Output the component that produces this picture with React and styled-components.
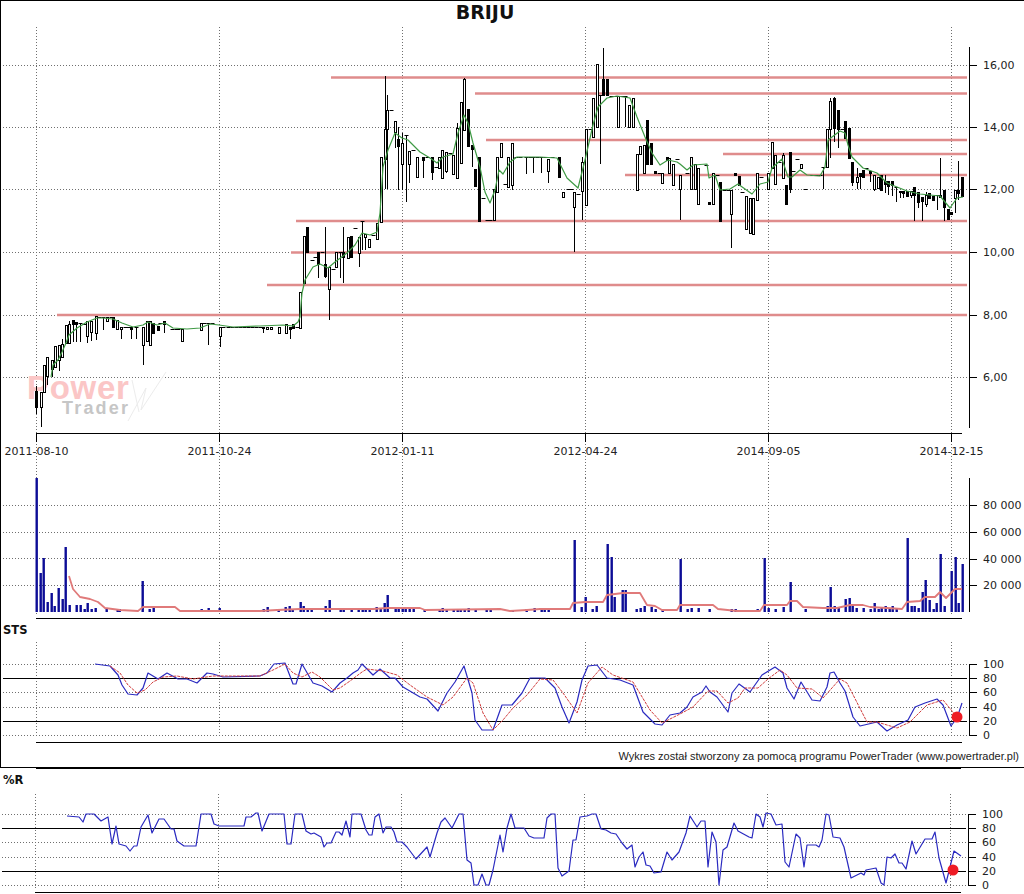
import React from "react";
import styled, { createGlobalStyle } from "styled-components";

const GlobalStyle = createGlobalStyle`
  html, body {
    margin: 0;
    padding: 0;
    background: #fff;
    overflow: hidden;
  }
  #root {
    width: 1024px;
    height: 894px;
  }
`;

const Page = styled.div`
  width: 1024px;
  height: 894px;
  background: #fff;
  font-family: "DejaVu Sans", Verdana, sans-serif;
  color: #111;
  overflow: hidden;
`;

const UpperFrame = styled.div`
  box-sizing: border-box;
  height: 768px;
  border-top: 1px solid #000;
  border-left: 1px solid #000;
  border-bottom: 1px solid #000;
  display: flex;
  flex-direction: column;
`;

const ChartTitle = styled.div`
  width: 968px;
  height: 24px;
  line-height: 22px;
  text-align: center;
  font-size: 19px;
  font-weight: 700;
`;

const PanelLabel = styled.div`
  height: ${({ $h }) => $h}px;
  padding-left: 2px;
  font-size: 11.5px;
  font-weight: 700;
  line-height: 17px;
`;

const Credit = styled.div`
  height: 18px;
  line-height: 16px;
  padding-right: 5px;
  text-align: right;
  font-family: "Liberation Sans", Arial, sans-serif;
  font-size: 11px;
  color: #222;
  white-space: nowrap;
`;

const ThickRule = styled.div`
  width: 925px;
  height: 1px;
  margin-left: 36px;
  background: #000;
`;

const LowerLabel = styled(PanelLabel)`
  padding-left: 3px;
  padding-top: 3px;
  height: 22px;
`;

const PlotSvg = styled.svg`
  display: block;
  flex: none;
`;

const GridLine = styled.line`
  stroke: #6f6f6f;
  stroke-width: 1;
  stroke-dasharray: 1 2;
`;

const AxisLine = styled.line`
  stroke: #000;
  stroke-width: 1;
`;

const AxisText = styled.text`
  font-family: "DejaVu Sans", Verdana, sans-serif;
  font-size: 11px;
  fill: #222;
`;

const LevelLine = styled.line`
  stroke: #df8c8c;
  stroke-width: 2.5;
`;

const Wick = styled.line`
  stroke: #000;
  stroke-width: 1;
`;

const Body = styled.rect`
  fill: ${({ $filled }) => ($filled ? "#000" : "#fff")};
  stroke: #000;
  stroke-width: 1;
`;

const Series = styled.polyline`
  fill: none;
  stroke: ${({ $color }) => $color};
  stroke-width: ${({ $w }) => $w || 1.2}px;
  stroke-linejoin: round;
  stroke-dasharray: ${({ $dash }) => $dash || "none"};
`;

const VolumeBar = styled.rect`
  fill: #0c0c96;
`;

const Marker = styled.circle`
  fill: #ee1c25;
`;

const MarkPower = styled.text`
  font-family: "Liberation Sans", Arial, sans-serif;
  font-size: 33px;
  font-weight: 700;
  letter-spacing: 0.7px;
  fill: #fbc6c6;
`;

const MarkTrader = styled.text`
  font-family: "Liberation Sans", Arial, sans-serif;
  font-size: 18px;
  font-weight: 700;
  letter-spacing: 2.2px;
  fill: #c6c6c6;
`;

const MarkStroke = styled.path`
  fill: none;
  stroke: #ececec;
  stroke-width: 1;
`;

// all chart data below is in page pixels, the svg viewBox takes care of the offset
const gridX = [36, 219, 402, 585, 768, 951];
const dates = ["2011-08-10", "2011-10-24", "2012-01-11", "2012-04-24", "2014-09-05", "2014-12-15"];

const levels = [
  [331, 77.5], [475, 93.5], [486, 140], [723, 154], [625, 175],
  [296, 221], [291, 252.5], [267, 285], [57, 315],
];

// x, high, body top, body bottom, low, filled
const candles = [
  [36,386,391,407,414,1],[41,392,392,407,427,0],[44,365,365,392,392,0],[47,357,357,376,385,0],[52,360,360,369,377,0],
  [55,346,346,367,367,0],[59,345,345,360,371,0],[62,339,344,357,357,0],[66,325,325,343,343,0],[69,321,324,343,343,0],
  [73,320,320,324,342,1],[76,322,322,324,342,1],[80,323,323,323,342,1],[84,324,324,324,324,1],[87,321,321,336,343,0],
  [91,321,321,332,341,0],[96,316,316,333,340,0],[99,317,317,317,317,1],[103,317,317,317,330,1],[107,317,317,321,321,0],
  [111,317,317,317,317,1],[113,317,317,327,327,1],[117,320,320,329,329,0],[121,327,327,329,339,0],[125,327,327,327,327,1],
  [128,327,327,327,327,1],[131,327,327,329,339,1],[136,327,327,327,339,1],[143,327,327,345,365,0],[147,321,321,341,341,0],
  [150,321,321,345,345,0],[153,323,323,333,333,1],[158,326,326,330,330,1],[160,323,323,323,323,1],[164,321,321,324,333,1],
  [172,329,329,329,329,1],[176,329,329,329,329,1],[178,329,329,329,329,1],[182,329,329,341,341,0],[201,323,323,330,330,0],
  [204,323,323,323,323,1],[208,323,323,323,345,1],[212,323,323,323,323,1],[220,327,327,336,347,0],[223,327,327,327,327,1],
  [228,327,327,327,327,1],[232,327,327,327,327,1],[236,327,327,327,327,1],[240,327,327,327,327,1],[244,327,327,327,327,1],
  [248,327,327,327,327,1],[252,327,327,327,327,1],[256,327,327,327,327,1],[260,327,327,327,327,1],[263,327,327,328,333,1],
  [267,327,327,329,329,0],[271,327,327,329,329,0],[279,327,327,333,333,0],[286,324,324,333,333,0],[290,327,327,329,339,1],
  [293,324,324,328,328,1],[297,327,327,327,327,1],
  [300,292,292,328,328,0],[304,236,236,283,283,0],[307,227,227,252,252,1],[312,260,260,260,260,1],[315,257,257,257,257,1],
  [318,252,252,264,278,1],[322,252,252,252,252,1],[325,227,264,276,278,1],[329,267,267,289,320,0],[333,269,269,269,269,1],
  [336,252,252,267,267,0],[340,252,252,252,278,1],[343,227,252,257,283,1],[348,237,237,258,258,0],[351,236,236,257,257,1],
  [355,228,228,228,228,1],[359,237,237,253,267,0],[362,221,221,221,250,1],[365,234,234,237,250,0],[369,239,239,247,247,0],
  [373,235,235,235,235,1],[377,223,223,239,239,0],[381,157,157,222,222,0],[385,76,129,159,189,0],[387,95,110,129,189,0],
  [391,110,110,110,110,1],[395,121,121,132,148,0],[398,127,139,146,190,1],[402,133,143,164,190,0],[406,135,135,135,202,1],
  [409,151,151,164,183,0],[413,150,150,150,150,1],[417,157,157,177,177,0],[423,157,157,160,178,1],[427,157,157,157,157,1],
  [432,157,157,172,180,1],[436,167,167,167,167,1],[439,157,157,168,168,0],[442,150,150,178,178,0],[446,152,152,171,173,0],
  [450,153,153,153,153,1],[453,155,155,174,174,0],[457,123,128,178,178,0],[461,102,102,163,163,0],[464,78,79,130,130,0],
  [468,109,109,146,146,1],[472,145,145,149,167,1],[475,169,169,186,186,1],[479,157,157,221,221,1],[483,198,198,198,198,1],
  [487,220,220,220,220,1],[490,220,220,220,220,1],[494,189,189,220,220,0],[497,157,157,192,192,0],[501,143,143,157,157,0],
  [505,184,184,184,184,1],[508,157,157,187,187,0],[512,143,143,185,190,0],[516,157,157,157,157,1],[520,157,157,157,157,1],
  [526,157,157,157,174,1],[530,157,157,157,157,1],[533,157,157,157,173,1],[537,157,157,157,157,1],[541,157,157,157,173,1],
  [545,157,157,157,157,1],[548,159,159,171,183,0],[552,157,157,157,157,1],[559,157,157,177,177,1],[563,192,192,197,197,0],
  [568,189,189,189,189,1],[571,189,189,189,189,1],[574,192,192,207,252,0],[578,194,194,194,194,1],[582,157,162,191,220,0],
  [586,129,129,205,205,0],[590,129,129,129,129,1],[593,98,98,137,137,0],[597,64,64,127,127,0],[600,95,95,95,164,1],
  [603,48,79,95,95,1],[607,79,79,95,95,1],[611,96,96,96,96,1],[615,96,96,96,96,1],[618,96,96,127,127,0],
  [622,96,96,96,96,1],[625,96,96,96,127,1],[629,105,105,127,127,0],[633,98,98,127,127,0],[637,154,154,190,190,0],
  [640,146,146,154,154,0],[644,145,145,173,173,0],[647,120,120,164,164,1],[651,143,143,164,164,1],[655,171,171,173,173,1],
  [659,173,173,173,173,1],[662,173,173,183,183,0],[667,157,157,160,160,1],[669,158,158,173,173,0],[673,164,164,185,185,0],
  [677,159,159,159,159,1],[680,175,175,189,220,0],[687,173,173,173,173,1],[691,157,157,189,189,0],[695,164,164,189,189,0],
  [698,168,168,204,204,0],[706,165,165,165,165,1],[709,202,202,204,204,1],[713,173,173,204,204,0],[717,175,175,175,175,1],
  [720,182,182,221,221,1],[724,190,190,190,190,1],[728,190,190,190,190,1],[731,190,190,214,248,0],[735,173,173,175,175,1],
  [739,176,176,185,185,1],[742,192,192,192,192,1],[746,196,196,229,229,0],[750,198,198,233,233,0],[753,198,198,234,234,0],
  [757,173,173,200,200,0],[761,177,177,177,177,1],[768,173,173,189,189,0],[772,142,142,168,168,0],[775,155,155,184,184,0],
  [779,162,162,162,162,1],[783,153,155,178,178,0],[786,185,185,204,204,1],[790,152,152,189,193,1],[793,171,171,171,171,1],
  [797,159,159,159,159,1],[801,164,164,168,168,0],[805,189,189,189,189,1],[812,175,175,175,175,1],[816,175,175,175,175,1],
  [820,175,175,175,175,1],[823,167,167,167,189,1],[827,129,129,167,167,0],[830,98,101,129,158,0],[834,97,98,128,142,1],
  [838,110,110,129,148,1],[842,129,129,129,129,1],[845,121,121,138,138,1],[849,128,128,158,158,1],[852,162,162,182,186,1],
  [857,168,177,182,189,0],[860,173,173,176,189,1],[863,170,170,177,177,1],[866,168,168,168,168,1],[870,171,171,173,182,1],
  [874,175,175,189,191,0],[878,177,177,188,188,0],[881,175,175,190,190,1],[885,175,181,184,193,1],[888,181,181,186,195,1],
  [892,181,181,185,196,1],[896,187,187,187,202,1],[900,191,191,192,198,1],[903,191,191,193,198,1],[907,191,191,196,196,1],
  [911,191,191,195,198,0],[914,187,187,195,221,1],[918,192,192,202,208,1],[922,197,197,201,221,1],[926,192,195,204,207,0],
  [929,193,193,198,198,1],[933,196,196,200,200,1],[937,195,195,195,210,1],[940,158,195,197,197,1],[944,190,190,207,221,1],
  [948,209,209,219,219,1],[951,212,212,214,214,1],[955,190,190,198,213,0],[958,161,190,193,200,1],[962,177,177,196,196,1],
];

const maLine = "51,377 53,365 58,360 62,352 66,343 69,335 77,328 87,322 97,318 103,318 113,319 122,323 133,327 143,325 148,322 157,325 165,323 173,328 187,329 200,328 210,324 219,325 233,327 260,326 283,325 293,326 298,322 300,317 302,293 305,280 313,267 320,264 328,268 335,262 347,253 355,245 362,233 370,235 377,232 380,213 383,167 388,150 395,133 402,138 408,140 420,152 430,158 437,163 443,157 453,154 458,133 464,115 468,123 473,143 480,167 485,192 490,203 495,190 499,170 503,174 510,162 517,157 540,157 557,158 567,178 578,188 585,160 593,125 598,107 607,98 617,96 630,98 637,117 645,137 652,153 660,165 668,160 677,162 680,164 687,170 693,165 707,164 709,178 715,175 720,190 730,189 738,184 752,194 760,184 768,182 772,168 782,159 788,177 792,177 800,170 807,175 820,176 825,167 828,140 840,131 845,133 848,145 852,157 863,168 877,173 887,183 907,191 920,194 940,196 950,208 957,198 963,197";

// x, top
const volumes = [
  [36,478],[40,573],[43,558],[47,602],[51,593],[54,606],[58,588],[62,599],[65,547],[69,605],[76,605],[80,605],[84,609],[87,603],[91,609],[95,608],
  [106,609],[117,609],[119,609],[142,581],[149,609],[153,608],[201,609],[208,608],[219,608],[263,609],[267,607],[278,609],[285,607],[289,606],[292,609],
  [300,602],[303,606],[307,609],[311,609],[325,606],[329,600],[340,608],[343,608],[351,609],[358,609],[362,609],[365,609],[369,609],[376,607],[380,609],
  [384,603],[387,595],[395,608],[398,608],[402,607],[405,609],[409,607],[413,609],[424,610],[439,610],[442,608],[446,610],[453,609],[457,609],[460,609],
  [464,609],[468,608],[475,609],[486,609],[490,609],[512,610],[526,609],[534,608],[541,608],[544,609],[548,608],[574,540],[581,607],[585,597],[592,609],
  [596,606],[607,544],[611,557],[614,597],[622,590],[625,590],[636,609],[640,608],[644,606],[651,607],[655,609],[662,610],[680,559],[687,609],[691,608],
  [698,608],[709,609],[731,609],[735,609],[757,609],[764,558],[768,608],[775,609],[783,607],[790,582],[805,609],[827,606],[830,587],[834,606],[838,608],
  [845,599],[849,598],[852,604],[856,608],[863,608],[870,609],[874,603],[878,609],[881,608],[885,606],[889,608],[892,606],[896,608],[907,538],[911,606],
  [914,606],[918,608],[922,592],[925,580],[929,600],[933,609],[936,603],[940,554],[944,606],[951,571],[955,557],[958,603],[962,564],
];

const volumeAvg = "69,576 73,589 80,597 90,599 98,602 105,608 120,610 138,611 143,607 175,607 180,611 260,611 277,610 300,609 340,609 373,609 387,608 420,608 425,610 500,609 510,611 527,610 540,609 570,609 573,603 585,602 603,602 607,595 623,593 640,593 647,605 655,606 662,610 677,610 680,605 713,605 718,609 737,611 760,611 764,605 787,605 790,601 797,601 803,607 823,608 837,608 850,605 863,605 870,607 887,608 902,609 907,602 920,601 925,597 935,597 940,592 946,598 955,589 962,589";

const stsK = "95,664 110,666 118,675 122,685 128,694 137,695 143,688 148,673 158,679 167,673 178,679 187,679 197,683 207,673 213,674 223,677 260,676 267,673 274,664 285,663 293,684 296,684 302,664 313,683 322,686 332,692 340,683 347,678 353,673 358,670 362,664 373,675 380,669 390,678 395,678 403,687 420,697 427,699 438,711 447,693 455,682 464,666 472,693 475,720 482,730 493,730 502,705 512,705 522,693 530,678 545,678 555,688 562,707 569,723 577,702 582,680 588,666 597,665 607,678 620,680 633,685 643,712 655,724 662,725 670,715 680,713 687,707 693,697 702,692 706,686 710,692 717,697 728,712 732,693 739,684 750,692 762,675 775,667 783,673 787,688 794,699 801,682 812,700 820,701 827,687 830,673 834,672 840,683 845,691 853,717 860,726 877,722 887,731 897,725 908,720 915,707 925,703 937,699 943,705 951,726 957,718 962,703";

const stsD = "110,666 120,673 128,685 137,693 145,690 153,682 163,677 177,676 193,679 213,676 260,676 273,670 285,664 293,673 302,677 312,672 320,677 333,690 340,688 350,681 362,672 367,669 383,671 397,675 410,685 427,697 443,705 453,697 467,678 473,683 483,713 493,730 503,720 513,708 527,695 540,679 553,680 563,693 577,713 588,683 602,667 613,675 633,682 650,710 662,723 680,714 693,707 708,691 717,691 728,703 738,698 745,688 758,688 768,679 780,670 787,675 797,688 812,689 823,698 840,679 847,683 867,722 877,722 897,728 910,722 927,705 943,700 957,717";

const wpr = "68,816 80,817 84,822 87,814 95,814 102,821 109,817 113,844 117,826 120,844 127,846 131,851 135,846 138,846 142,827 149,815 153,833 160,819 165,819 172,829 175,829 178,841 185,846 197,846 202,814 212,814 215,824 220,826 245,826 247,817 252,817 257,813 259,813 263,831 270,814 285,814 288,844 292,844 296,814 303,814 307,831 312,834 315,833 322,837 325,847 328,843 332,843 337,832 340,832 343,835 347,821 351,837 353,814 362,814 367,830 370,835 373,835 376,817 380,814 384,833 387,827 392,827 395,832 398,842 403,842 408,847 417,859 428,847 431,857 438,833 442,822 446,818 453,828 460,814 464,814 468,860 472,863 475,885 479,885 483,874 487,885 490,885 494,870 501,835 504,852 508,828 512,814 516,828 525,828 530,836 535,838 545,838 548,818 552,814 556,814 559,868 563,876 570,871 574,840 577,840 581,817 588,816 593,814 597,814 602,829 607,830 612,833 617,834 623,843 628,849 633,845 636,867 640,857 644,852 647,865 651,866 655,873 662,872 668,852 673,860 680,852 687,833 691,816 698,827 702,821 706,821 709,867 713,832 717,842 720,885 724,850 728,847 735,823 739,831 750,837 753,838 757,814 761,817 764,827 767,813 772,814 777,825 783,824 786,862 790,867 797,834 801,838 805,867 808,845 817,845 820,847 823,840 827,814 830,815 834,837 841,838 845,847 852,878 862,873 865,875 867,870 877,868 882,883 885,885 888,857 892,858 896,854 900,863 903,863 907,869 913,841 917,854 926,839 933,839 936,832 940,858 947,883 955,851 962,856";

const Plot = ({ top, height, children }) => (
  <PlotSvg width="1023" height={height} viewBox={`1 ${top} 1023 ${height}`}>
    {children}
  </PlotSvg>
);

const WideGrid = ({ ys, y1, y2, x1 = 3 }) => (
  <>
    {ys.map((y) => (
      <GridLine key={y} x1={x1} x2="968" y1={y + 0.5} y2={y + 0.5} />
    ))}
    {gridX.map((x) => (
      <GridLine key={x} x1={x + 0.5} x2={x + 0.5} y1={y1} y2={y2} />
    ))}
  </>
);

const ValueAxis = ({ ticks, y1, y2 }) => (
  <>
    <AxisLine x1="969.5" x2="969.5" y1={y1} y2={y2} />
    {ticks.map(([y, label]) => (
      <React.Fragment key={label}>
        <AxisLine x1="969" x2="977" y1={y + 0.5} y2={y + 0.5} />
        <AxisText x="983" y={y + 4}>{label}</AxisText>
      </React.Fragment>
    ))}
  </>
);

const Candle = ({ c }) => {
  const [x, hi, top, bot, lo, filled] = c;
  const cx = Math.round(x) + 0.5;
  if (top === bot) {
    return (
      <>
        <Wick x1={cx} x2={cx} y1={hi} y2={lo} />
        <Wick x1={cx - 2} x2={cx + 2} y1={top + 0.5} y2={top + 0.5} />
      </>
    );
  }
  return (
    <>
      <Wick x1={cx} x2={cx} y1={hi} y2={lo} />
      <Body $filled={filled} x={cx - 1} y={top + 0.5} width="2" height={bot - top} />
    </>
  );
};

const PriceChart = () => (
  <Plot top={25} height={453}>
    <WideGrid ys={[65, 127, 189, 252, 315, 377]} y1={27} y2={478} />
    <MarkStroke d="M128 421 L146 388 L141 410 L166 372 M132 380 L139 412" />
    <MarkPower x="27" y="398.5">Power</MarkPower>
    <MarkTrader x="62" y="414">Trader</MarkTrader>
    {levels.map(([x, y]) => (
      <LevelLine key={y} x1={x} x2="967" y1={y} y2={y} />
    ))}
    {candles.map((c) => (
      <Candle key={c[0]} c={c} />
    ))}
    <Series $color="#3f9a45" points={maLine} />
    <AxisLine x1="36" x2="962" y1="433.5" y2="433.5" />
    {gridX.map((x, i) => (
      <React.Fragment key={x}>
        <AxisLine x1={x + 0.5} x2={x + 0.5} y1="433" y2="442" />
        <AxisText x={x + 0.5} y="455" textAnchor="middle">{dates[i]}</AxisText>
      </React.Fragment>
    ))}
    <ValueAxis
      y1={47}
      y2={428}
      ticks={[[65, "16,00"], [127, "14,00"], [189, "12,00"], [252, "10,00"], [315, "8,00"], [377, "6,00"]]}
    />
  </Plot>
);

const VolumeChart = () => (
  <Plot top={478} height={144}>
    <WideGrid ys={[505, 532, 558, 585]} y1={478} y2={616} />
    {volumes.map(([x, top]) => (
      <VolumeBar key={x} x={x - 0.5} y={top} width="2.4" height={612 - top} />
    ))}
    <Series $color="#e07a7a" $w={1.8} points={volumeAvg} />
    <AxisLine x1="36" x2="962" y1="618.5" y2="618.5" />
    <ValueAxis
      y1={478}
      y2={612}
      ticks={[[505, "80 000"], [532, "60 000"], [559, "40 000"], [585, "20 000"]]}
    />
  </Plot>
);

const oscillatorTicks = (top) =>
  [[0, "100"], [14, "80"], [28, "60"], [43, "40"], [57, "20"], [71, "0"]].map(([d, l]) => [top + d, l]);

const Oscillator = ({ top, height, gridEnd, children }) => (
  <Plot top={top} height={height}>
    <WideGrid ys={[gridEnd - 71, gridEnd - 43, gridEnd - 28, gridEnd]} y1={top} y2={gridEnd + 3} />
    <AxisLine x1="3" x2="967" y1={gridEnd - 57 + 0.5} y2={gridEnd - 57 + 0.5} />
    <AxisLine x1="3" x2="967" y1={gridEnd - 14 + 0.5} y2={gridEnd - 14 + 0.5} />
    {children}
    <AxisLine x1="36" x2="962" y1={gridEnd + 7.5} y2={gridEnd + 7.5} />
    <ValueAxis y1={gridEnd - 71} y2={gridEnd} ticks={oscillatorTicks(gridEnd - 71)} />
  </Plot>
);

export default function App() {
  return (
    <Page>
      <GlobalStyle />
      <UpperFrame>
        <ChartTitle>BRIJU</ChartTitle>
        <PriceChart />
        <VolumeChart />
        <PanelLabel $h={20}>STS</PanelLabel>
        <Oscillator top={642} height={106} gridEnd={735}>
          <Series $color="#2a2ac0" points={stsK} />
          <Series $color="#d03c3c" $w={1} $dash="3 1" points={stsD} />
          <Marker cx="957" cy="717" r="5.5" />
        </Oscillator>
        <Credit>Wykres został stworzony za pomocą programu PowerTrader (www.powertrader.pl)</Credit>
      </UpperFrame>
      <ThickRule />
      <LowerLabel>%R</LowerLabel>
      <Oscillator top={794} height={100} gridEnd={885}>
        <Series $color="#2a2ac0" points={wpr} />
        <Marker cx="954" cy="870" r="5.5" />
      </Oscillator>
    </Page>
  );
}
